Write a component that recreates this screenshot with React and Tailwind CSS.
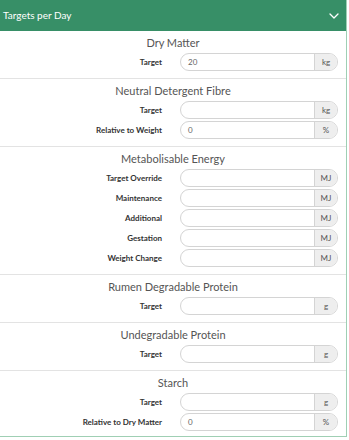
import React from "react";

const sections = [
  { title: "Dry Matter", rows: [{ label: "Target", value: "20", unit: "kg" }] },
  {
    title: "Neutral Detergent Fibre",
    rows: [
      { label: "Target", value: "", unit: "kg" },
      { label: "Relative to Weight", value: "0", unit: "%" },
    ],
  },
  {
    title: "Metabolisable Energy",
    rows: [
      { label: "Target Override", value: "", unit: "MJ" },
      { label: "Maintenance", value: "", unit: "MJ" },
      { label: "Additional", value: "", unit: "MJ" },
      { label: "Gestation", value: "", unit: "MJ" },
      { label: "Weight Change", value: "", unit: "MJ" },
    ],
  },
  { title: "Rumen Degradable Protein", rows: [{ label: "Target", value: "", unit: "g" }] },
  { title: "Undegradable Protein", rows: [{ label: "Target", value: "", unit: "g" }] },
  {
    title: "Starch",
    rows: [
      { label: "Target", value: "", unit: "g" },
      { label: "Relative to Dry Matter", value: "0", unit: "%" },
    ],
  },
];

function Row({ label, value, unit }) {
  return (
    <div className="flex items-center h-[18px]">
      <div className="w-[162px] text-right text-[8px] font-bold text-[#333] leading-none">
        {label}
      </div>
      <div className="ml-[18px] w-[158px] h-[18px] flex rounded-full border border-[#d4d4d4] overflow-hidden">
        <div className="flex-1 flex items-center pl-[7px] text-[8px] text-[#666]">
          {value}
        </div>
        <div className="w-[23px] flex items-center justify-center bg-[#eeeeee] border-l border-[#d4d4d4] text-[8px] text-[#555]">
          {unit}
        </div>
      </div>
    </div>
  );
}

function Section({ title, rows, first, last }) {
  return (
    <div
      className={`pt-[5px] ${last ? "pb-[5px]" : "pb-[7px]"} ${
        first ? "" : "border-t border-[#e3e3e3]"
      }`}
    >
      <div className="h-[14px] leading-[14px] text-center text-[11px] text-[#555] mb-[3px]">
        {title}
      </div>
      <div className="flex flex-col gap-[2px]">
        {rows.map((r, i) => (
          <Row key={i} {...r} />
        ))}
      </div>
    </div>
  );
}

export default function App() {
  return (
    <div
      className="w-[349px] h-[440px] bg-white"
      style={{ fontFamily: "Lato, 'Open Sans', sans-serif" }}
    >
      <div className="w-[347px] border-r border-b border-[#9fcfb4]">
        {/* Header */}
        <div className="h-[31px] bg-[#378f67] flex items-center justify-between pl-[3px] pr-[7px]">
          <span className="text-white text-[10px]">Targets per Day</span>
          <svg width="10" height="6" viewBox="0 0 10 6" fill="none">
            <polyline
              points="1,1 5,5 9,1"
              stroke="white"
              strokeWidth="1.3"
              strokeLinecap="round"
              strokeLinejoin="round"
            />
          </svg>
        </div>

        {sections.map((s, i) => (
          <Section
            key={s.title}
            {...s}
            first={i === 0}
            last={i === sections.length - 1}
          />
        ))}
      </div>
    </div>
  );
}
